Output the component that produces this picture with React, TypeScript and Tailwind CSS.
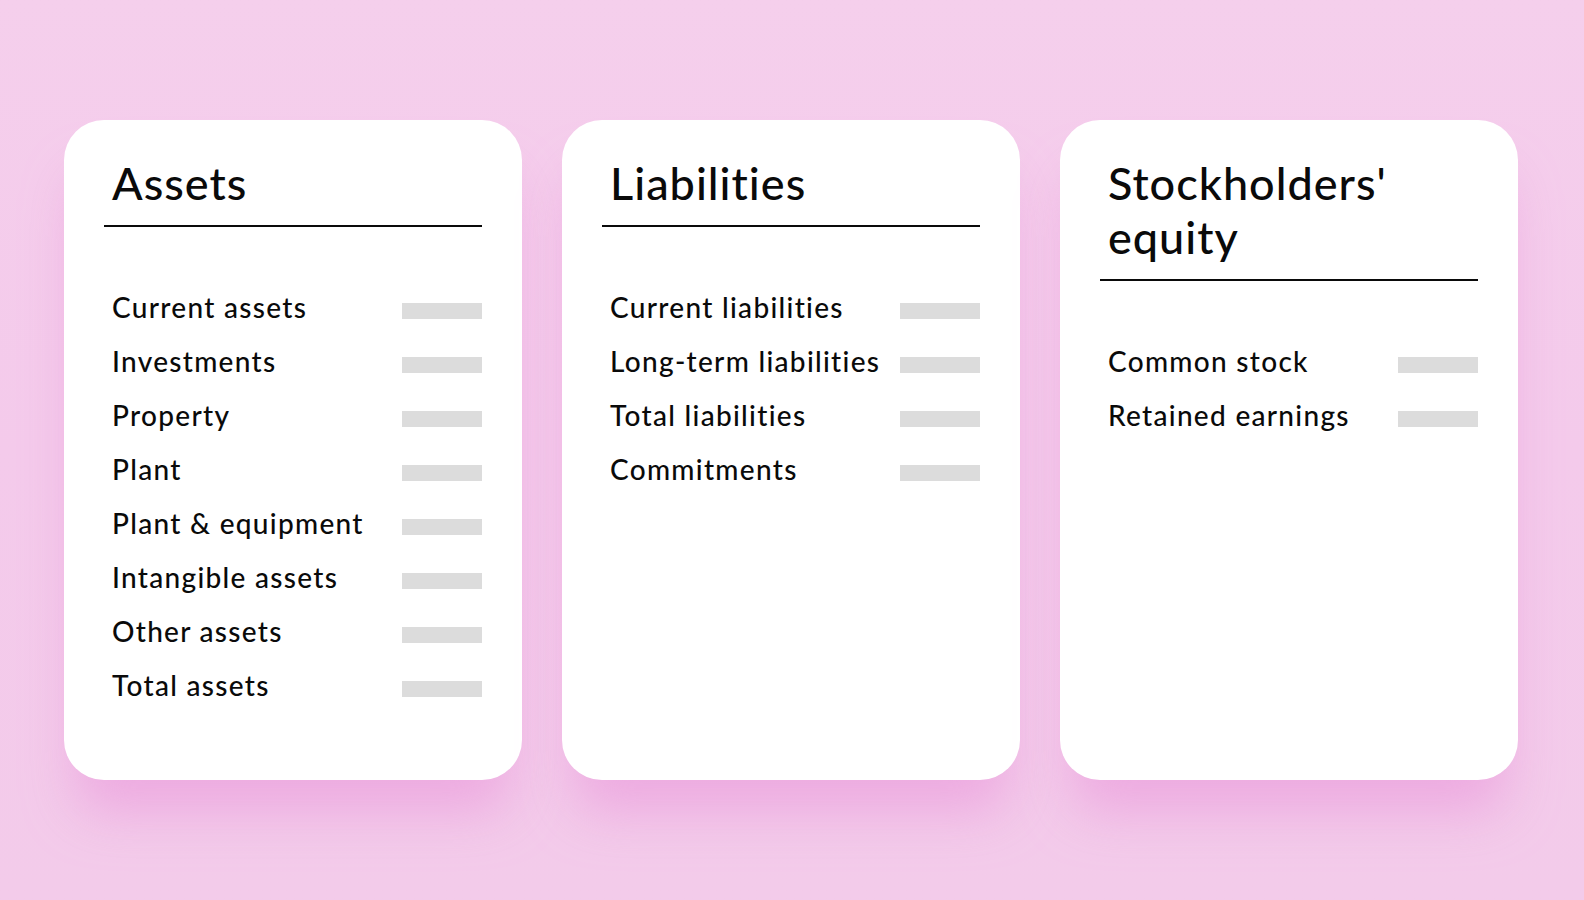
import React from "react";

type Section = {
  title: string[];
  rows: string[];
};

const sections: Section[] = [
  {
    title: ["Assets"],
    rows: [
      "Current assets",
      "Investments",
      "Property",
      "Plant",
      "Plant & equipment",
      "Intangible assets",
      "Other assets",
      "Total assets",
    ],
  },
  {
    title: ["Liabilities"],
    rows: [
      "Current liabilities",
      "Long-term liabilities",
      "Total liabilities",
      "Commitments",
    ],
  },
  {
    title: ["Stockholders'", "equity"],
    rows: ["Common stock", "Retained earnings"],
  },
];

function Card({ section }: { section: Section }) {
  return (
    <div className="w-[458px] h-[660px] shrink-0 rounded-[40px] bg-white px-10 pt-[36px] shadow-[0_44px_50px_-12px_rgba(234,150,218,0.6)]">
      {/* Title + rule */}
      <div className="border-b-2 border-[#0a0a0a] pb-[15px] pl-2">
        {section.title.map((line) => (
          <div key={line} className="text-[45px] leading-[54px] font-medium tracking-[1px] text-[#0a0a0a]">
            {line}
          </div>
        ))}
      </div>

      {/* Line items */}
      <div className="mt-[53px] flex flex-col">
        {section.rows.map((row) => (
          <div key={row} className="flex h-[54px] items-start justify-between pl-2">
            <span className="text-[28px] leading-[54px] font-medium tracking-[1.3px] text-[#0a0a0a] whitespace-nowrap">
              {row}
            </span>
            <div className="mt-[23px] h-4 w-20 shrink-0 bg-[#dcdcdc]" />
          </div>
        ))}
      </div>
    </div>
  );
}

export default function App() {
  return (
    <div
      className="min-h-screen w-full bg-gradient-to-b from-[#f5cfec] via-[#f4caeb] to-[#f3cbea] pt-[120px] px-[64px] [font-variant-ligatures:none]"
      style={{ fontFamily: "Lato, 'Noto Sans', sans-serif" }}
    >
      <div className="flex gap-[40px]">
        {sections.map((s) => (
          <Card key={s.title.join(" ")} section={s} />
        ))}
      </div>
    </div>
  );
}
